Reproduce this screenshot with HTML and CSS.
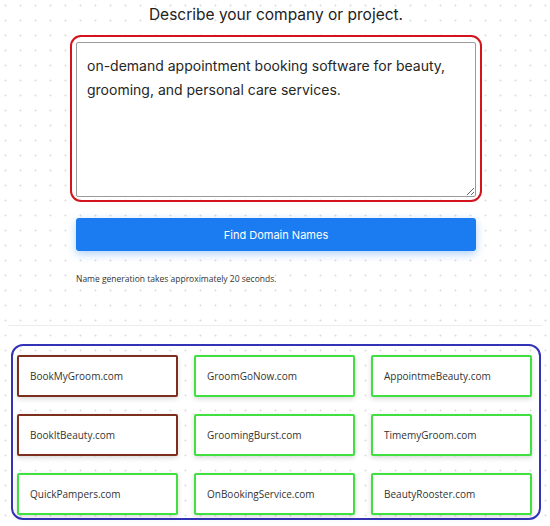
FILE: index.html
```html
<!DOCTYPE html>
<html>
<head>
<meta charset="utf-8">
<link rel="stylesheet" href="styles.css">
</head>
<body>
<div class="page">
  <section class="hero">
    <h1 class="title">Describe your company or project.</h1>
    <div class="outline-red">
      <textarea class="desc">on-demand appointment booking software for beauty, grooming, and personal care services.</textarea>
    </div>
    <button class="find-btn">Find Domain Names</button>
    <p class="note">Name generation takes approximately 20 seconds.</p>
  </section>
  <hr class="divider">
  <section class="outline-blue">
    <div class="grid">
      <div class="card taken">BookMyGroom.com</div>
      <div class="card">GroomGoNow.com</div>
      <div class="card">AppointmeBeauty.com</div>
      <div class="card taken">BookItBeauty.com</div>
      <div class="card">GroomingBurst.com</div>
      <div class="card">TimemyGroom.com</div>
      <div class="card">QuickPampers.com</div>
      <div class="card">OnBookingService.com</div>
      <div class="card">BeautyRooster.com</div>
    </div>
  </section>
</div>
</body>
</html>
```
FILE: styles.css
```css
html, body {
  margin: 0;
  padding: 0;
}
body {
  width: 550px;
  height: 526px;
  overflow: hidden;
  background-color: #fff;
  background-image: radial-gradient(circle, #dcdcdc 0.8px, transparent 1.2px);
  background-size: 15px 15px;
  background-position: -2px -2px;
  font-family: Inter, "Noto Sans", sans-serif;
  color: #1f1f1f;
}
.page {
  padding: 0 8px;
}
.hero {
  width: 400px;
  margin: 0 auto;
  padding-left: 2px;
  display: flex;
  flex-direction: column;
}
.title {
  margin: 4px 0 0;
  font-size: 15.5px;
  font-weight: 400;
  line-height: 22px;
  text-align: center;
  color: #222;
  white-space: nowrap;
}
.outline-red {
  margin: 9px -6px 0;
  border: 2px solid #d3141c;
  border-radius: 11px;
  padding: 5px 4px 3px;
  height: 167px;
  box-sizing: border-box;
  display: flex;
}
.desc {
  flex: 1;
  margin: 0;
  border: 1px solid #9a9a9a;
  border-radius: 2px;
  padding: 11px 10px;
  font-family: Inter, "Noto Sans", sans-serif;
  font-size: 14px;
  line-height: 24px;
  color: #262626;
  background: #fff;
  resize: vertical;
}
.find-btn {
  margin-top: 16px;
  height: 33px;
  border: none;
  border-radius: 3px;
  background: #1a7cf0;
  color: #fff;
  font-family: Inter, "Noto Sans", sans-serif;
  font-size: 11px;
  box-shadow: 0 3px 8px rgba(26, 124, 240, 0.35);
}
.note {
  margin: 22px 0 0;
  font-family: "Open Sans", sans-serif;
  font-size: 8.5px;
  line-height: 12px;
  color: #333;
}
.divider {
  margin: 40px 0 0;
  border: none;
  border-top: 1px solid #ececec;
  height: 0;
}
.outline-blue {
  margin: 18px 1px 0 3px;
  border: 2px solid #3333b8;
  border-radius: 12px;
  padding: 9px 6px 3px 4px;
  height: 176px;
  box-sizing: border-box;
}
.grid {
  display: grid;
  grid-template-columns: repeat(3, 161px);
  column-gap: 16px;
  row-gap: 17px;
}
.card {
  height: 42px;
  box-sizing: border-box;
  border: 2px solid #3fe03f;
  border-radius: 2px;
  background: #fff;
  padding: 0 11px;
  display: flex;
  align-items: center;
  font-family: "Open Sans", sans-serif;
  font-size: 10px;
  color: #333;
  box-shadow: 0 2px 5px rgba(0, 0, 0, 0.15);
}
.card.taken {
  border-color: #7b2f1c;
}
```
